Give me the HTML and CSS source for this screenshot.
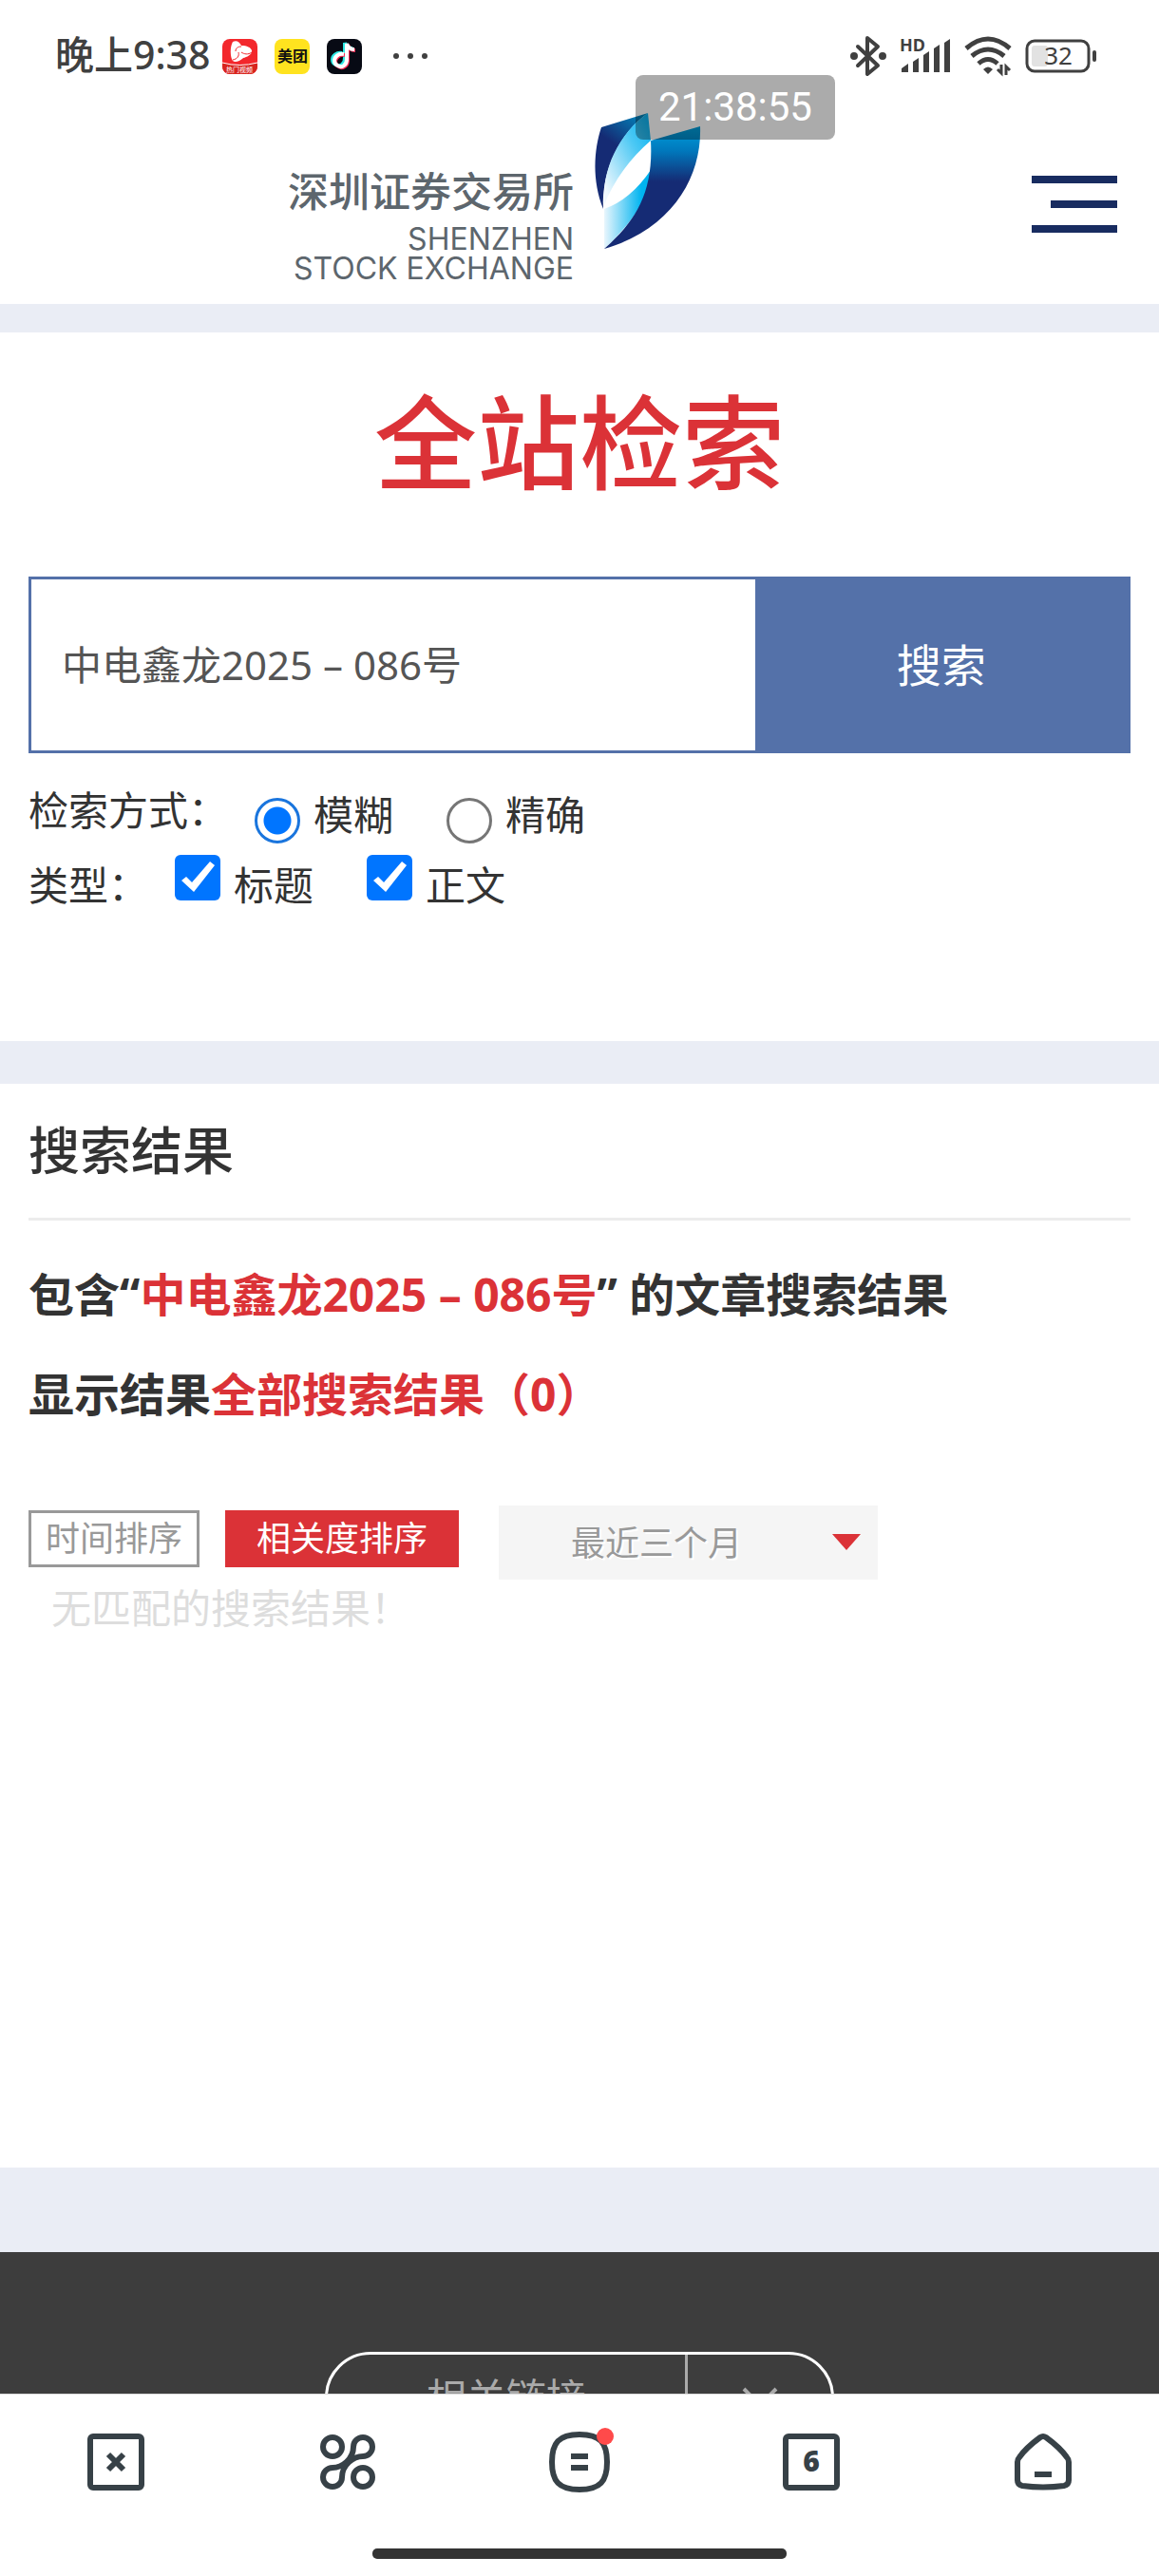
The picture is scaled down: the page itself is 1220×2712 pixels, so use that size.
FILE: index.html
```html
<!DOCTYPE html>
<html lang="zh-CN">
<head>
    <meta charset="UTF-8">
    <meta name="viewport" content="width=device-width, initial-scale=1.0">
    <title>全站检索</title>
    <link rel="stylesheet" href="styles.css">
</head>
<body>
    <div class="page">
        <div class="status-bar">
            <span class="status-time">晚上9:38</span>
            <div class="status-apps">
                <svg class="app-icon" viewBox="0 0 37 37">
                    <rect width="37" height="37" rx="8" fill="#f3272c"/>
                    <path d="M0 25q18 5 37 0v4a8 8 0 0 1-8 8H8a8 8 0 0 1-8-8z" fill="#d8251f"/>
                    <path d="M0 25q18 5 37 0" fill="none" stroke="#fff" stroke-width="1"/>
                    <path d="M11 3c4-2 7 0 9 4 6 0 10 2 11 5 1 4-5 7-9 8-4 4-9 5-11 3-3-4-3-15 0-20z" fill="#fff"/>
                    <path d="M20 8c-4 0-6 2-6 5M31 14c-4 3-8 2-11 0M11 22c5-1 7-4 6-8" fill="none" stroke="#f3272c" stroke-width="1"/>
                    <text x="18" y="35" class="app-caption">热门视频</text>
                </svg>
                <svg class="app-icon" viewBox="0 0 37 37">
                    <rect width="37" height="37" rx="8" fill="#ffe31f"/>
                    <text x="19" y="24" class="app-name">美团</text>
                </svg>
                <svg class="app-icon" viewBox="0 0 37 37">
                    <rect width="37" height="37" rx="8" fill="#070a14"/>
                    <g fill="none" stroke-width="4">
                        <path d="M18 16c-6-1-10 3-10 7s6 8 10 5 3-6 3-9V5c1 4 4 6 8 6" stroke="#2be8e4" transform="translate(-2 -1)"/>
                        <path d="M18 16c-6-1-10 3-10 7s6 8 10 5 3-6 3-9V5c1 4 4 6 8 6" stroke="#fb2c55" transform="translate(1 1)"/>
                        <path d="M18 16c-6-1-10 3-10 7s6 8 10 5 3-6 3-9V5c1 4 4 6 8 6" stroke="#fff"/>
                    </g>
                </svg>
                <svg class="more-icon" viewBox="0 0 38 8" fill="#404040">
                    <circle cx="4" cy="4" r="3"/>
                    <circle cx="19" cy="4" r="3"/>
                    <circle cx="34" cy="4" r="3"/>
                </svg>
            </div>
            <div class="status-system">
                <svg width="38" height="42" viewBox="0 0 38 42" fill="none" stroke="#404040" stroke-width="4" stroke-linejoin="round" stroke-linecap="round">
                    <path d="M8 11l21 20-11 9V2l11 9L8 31"/>
                    <circle cx="4" cy="21" r="2"/>
                    <circle cx="34" cy="21" r="2"/>
                </svg>
                <svg width="54" height="40" viewBox="0 0 54 40" fill="#404040">
                    <text x="0" y="15" class="hd">HD</text>
                    <path d="M2 37v-4l7-5v9zM14 37V26l6-4v15zM25 37V19l6-4v22zM36 37V12l6-4v29zM47 37V6l6-4v35z"/>
                </svg>
                <svg width="50" height="42" viewBox="0 0 50 42" fill="none" stroke="#404040" stroke-width="5">
                    <path d="M2 13q23-20 46 0M8 21q17-14 34 0M15 29q10-9 20 0"/>
                    <path d="M25 40l-5-5q5-5 10 0z" fill="#404040" stroke="none"/>
                    <path d="M39 30v9l-4-4M44 41v-9l4 4" stroke-width="3"/>
                </svg>
                <svg width="76" height="36" viewBox="0 0 76 36">
                    <rect x="2" y="2" width="65" height="32" rx="8" fill="none" stroke="#404040" stroke-width="3"/>
                    <rect x="7" y="7" width="17" height="22" rx="3" fill="#e2e2e2"/>
                    <rect x="71" y="12" width="4" height="12" rx="2" fill="#404040"/>
                    <text x="35" y="27" class="battery">32</text>
                </svg>
            </div>
        </div>

        <header class="header">
            <a class="logo" href="#">
                <span class="logo-text">
                    <span class="logo-cn">深圳证券交易所</span>
                    <span class="logo-en">SHENZHEN<br>STOCK EXCHANGE</span>
                </span>
                <svg class="logo-mark" viewBox="0 0 112 146">
                    <defs>
                        <linearGradient id="navy" x1="1" y1="0" x2=".6" y2="1">
                            <stop offset="0" stop-color="#0090c4"/>
                            <stop offset=".5" stop-color="#152b74"/>
                        </linearGradient>
                        <linearGradient id="right" x1="0" y1="0" x2="0" y2="1">
                            <stop offset="0" stop-color="#00a0dc"/>
                            <stop offset=".2" stop-color="#0078bc"/>
                            <stop offset=".45" stop-color="#152b74"/>
                        </linearGradient>
                        <linearGradient id="sky" x1="1" y1="0" x2="0" y2="1">
                            <stop offset="0" stop-color="#00aeef"/>
                            <stop offset=".35" stop-color="#4bc8f4"/>
                            <stop offset=".9" stop-color="#f0f8fe"/>
                        </linearGradient>
                        <linearGradient id="low" x1="0" y1="0" x2="1" y2="0">
                            <stop offset="0" stop-color="#eaf6fd"/>
                            <stop offset=".8" stop-color="#00b4f0"/>
                        </linearGradient>
                    </defs>
                    <path d="M7 16L56 1C26 22 7 62 9 102-3 72-1 40 7 16z" fill="url(#navy)"/>
                    <path d="M56 1l3 29C38 48 20 72 10 98 7 60 26 22 56 1z" fill="url(#sky)"/>
                    <path d="M59 61Q38 92 10 102v42C42 114 60 86 59 61z" fill="url(#low)"/>
                    <path d="M59 30l52-15c2 52-28 108-101 129C44 114 62 84 59 30z" fill="url(#right)"/>
                </svg>
            </a>
            <button class="menu-button" type="button" aria-label="菜单">
                <svg width="90" height="60" viewBox="0 0 90 60" fill="#182c60">
                    <path d="M0 0h90v8H0zM20 26h70v8H20zM0 52h90v8H0z"/>
                </svg>
            </button>
        </header>

        <section class="search">
            <h1 class="title">全站检索</h1>
            <form class="search-form">
                <div class="search-box">
                    <input class="search-input" type="text" value="中电鑫龙2025 – 086号" aria-label="关键词">
                    <button class="search-button" type="button">搜索</button>
                </div>
                <div class="options options-mode">
                    <span class="options-label">检索方式：</span>
                    <label class="option"><input type="radio" name="mode" checked>模糊</label>
                    <label class="option"><input type="radio" name="mode">精确</label>
                </div>
                <div class="options options-type">
                    <span class="options-label">类型：</span>
                    <label class="option"><input type="checkbox" checked>标题</label>
                    <label class="option"><input type="checkbox" checked>正文</label>
                </div>
            </form>
        </section>

        <section class="results">
            <h2 class="results-title">搜索结果</h2>
            <p class="summary">包含“<span class="keyword">中电鑫龙2025 – 086号</span>” 的文章搜索结果</p>
            <p class="summary">显示结果<span class="keyword">全部搜索结果（0）</span></p>
            <div class="sort">
                <button class="sort-button" type="button">时间排序</button>
                <button class="sort-button active" type="button">相关度排序</button>
                <div class="range">
                    <select class="range-select" aria-label="时间范围">
                        <option>最近三个月</option>
                    </select>
                    <svg class="range-arrow" viewBox="0 0 30 17"><path d="M0 0h30L15 17z" fill="#db3237"/></svg>
                </div>
            </div>
            <p class="empty">无匹配的搜索结果！</p>
        </section>

        <footer class="footer">
            <button class="links" type="button">
                <span class="links-text">相关链接</span>
                <span class="links-arrow">
                    <svg width="36" height="20" viewBox="0 0 36 20" fill="none" stroke="#aaa" stroke-width="4"><path d="M1 1l17 17L35 1"/></svg>
                </span>
            </button>
        </footer>
    </div>

    <nav class="nav">
        <div class="nav-items">
            <button class="nav-button" type="button" aria-label="关闭">
                <svg viewBox="0 0 60 60"><rect x="3" y="3" width="54" height="54" rx="3"/><path d="M22 22l16 16M38 22L22 38"/></svg>
            </button>
            <button class="nav-button" type="button" aria-label="工具">
                <svg viewBox="0 0 60 60"><circle cx="14" cy="14" r="10"/><circle cx="46" cy="46" r="10"/><path d="M46 24a10 10 0 1 0-10-10C36 27 24 36 14 36a10 10 0 1 0 10 10C24 33 36 24 46 24z"/></svg>
            </button>
            <button class="nav-button" type="button" aria-label="菜单栏">
                <svg viewBox="0 0 60 60"><path d="M30 1C52 1 59 10 59 30S52 59 30 59 1 50 1 30 8 1 30 1zM21 24h18M21 36h18"/></svg>
                <span class="dot"></span>
            </button>
            <button class="nav-button" type="button" aria-label="窗口">
                <svg viewBox="0 0 60 60"><rect x="3" y="3" width="54" height="54" rx="3"/><text x="30" y="40" class="tab-count">6</text></svg>
            </button>
            <button class="nav-button" type="button" aria-label="主页">
                <svg viewBox="0 0 60 60"><path d="M27 4q3-2 6 0Q48 15 55 25q2 2 2 5v19q0 5-5 6-22 3-44 0-5-1-5-6V30q0-3 2-5Q12 15 27 4zM21 43h18"/></svg>
            </button>
        </div>
        <div class="home-bar"></div>
    </nav>

    <div class="clock">21:38:55</div>
</body>
</html>
```

FILE: styles.css
```css
* {
    box-sizing: border-box;
}
body {
    margin: 0;
    height: 100vh;
    display: flex;
    flex-direction: column;
    font-family: "Noto Sans", "Noto Sans CJK SC", sans-serif;
    font-size: 42px;
    color: #333;
    background: #fff;
}
button, input, select {
    font: inherit;
    color: inherit;
    margin: 0;
    border: none;
    border-radius: 0;
}
button {
    padding: 0;
    background: none;
    cursor: pointer;
}
svg {
    display: block;
    overflow: visible;
}
h1, h2, p {
    margin: 0;
}
.page {
    flex: 1;
    min-height: 0;
    overflow: hidden;
}

/* status bar */
.status-bar {
    display: flex;
    align-items: center;
    height: 118px;
    padding: 0 65px 0 58px;
}
.status-time {
    font-size: 41px;
    font-weight: 500;
    line-height: 56px;
    padding-bottom: 4px;
    color: #404040;
}
.status-apps {
    display: flex;
    align-items: center;
    gap: 18px;
    margin-left: 12px;
}
.app-icon {
    width: 37px;
    height: 37px;
}
.app-caption {
    font-size: 7px;
    fill: #fff;
    text-anchor: middle;
}
.app-name {
    font-size: 16px;
    font-weight: bold;
    fill: #111;
    text-anchor: middle;
}
.more-icon {
    width: 38px;
    margin-left: 14px;
}
.status-system {
    display: flex;
    align-items: center;
    gap: 14px;
    margin-left: auto;
}
.hd {
    font-size: 18px;
    font-weight: bold;
}
.battery {
    font-size: 26px;
    text-anchor: middle;
    fill: #404040;
}

/* header */
.header {
    display: flex;
    justify-content: space-between;
    padding: 0 44px 0 304px;
    height: 202px;
}
.logo {
    display: flex;
    gap: 22px;
    color: #5d666d;
    text-decoration: none;
}
.logo-text {
    display: flex;
    flex-direction: column;
    align-items: flex-end;
    width: 300px;
    padding-top: 60px;
    white-space: nowrap;
}
.logo-cn {
    font-size: 43px;
    line-height: 48px;
    font-weight: 500;
}
.logo-en {
    font-family: Inter, sans-serif;
    font-size: 32px;
    line-height: 31px;
    text-align: right;
    padding-top: 10px;
}
.logo-mark {
    width: 112px;
    height: 146px;
}
.menu-button {
    align-self: flex-start;
    margin-top: 67px;
}

/* search */
.search {
    border-top: 30px solid #eaedf5;
    border-bottom: 45px solid #eaedf5;
    padding: 48px 30px 132px;
}
.title {
    font-size: 108px;
    line-height: 136px;
    font-weight: 500;
    text-align: center;
    color: #db3237;
}
.search-box {
    display: flex;
    height: 186px;
    margin-top: 73px;
    border: 3px solid #5471a9;
}
.search-input {
    flex: 1;
    min-width: 0;
    padding: 0 32px 6px;
    color: #555;
    outline: none;
}
.search-button {
    flex: 0 0 34%;
    padding-bottom: 6px;
    font-size: 47px;
    color: #fff;
    background: #5471a9;
}
.options {
    display: flex;
    align-items: flex-start;
    gap: 56px;
}
.options-label {
    margin-right: -28px;
}
.options-mode {
    padding-top: 36px;
    line-height: 48px;
}
.options-mode .option {
    line-height: 58px;
}
.options-type {
    padding-top: 12px;
    line-height: 64px;
}
.option {
    display: flex;
    gap: 14px;
}
.option input {
    appearance: none;
    width: 48px;
    height: 48px;
}
.option input[type="radio"] {
    margin-top: 11px;
    border: 3px solid #767676;
    border-radius: 50%;
}
.option input[type="radio"]:checked {
    border-color: #1a75dd;
    background: radial-gradient(circle, #0075ff 14px, #fff 15px);
}
.option input[type="checkbox"] {
    border: 3px solid #767676;
    border-radius: 6px;
}
.option input[type="checkbox"]:checked {
    border: none;
    background: #0075ff;
}
.option input[type="checkbox"]:checked::after {
    content: "";
    display: block;
    height: 48px;
    background: #fff;
    clip-path: polygon(7px 27px, 12px 23px, 18px 29px, 37px 7px, 42px 11px, 20px 39px);
}

/* results */
.results {
    padding: 30px 30px 559px;
}
.results-title {
    font-size: 54px;
    line-height: 80px;
    font-weight: 500;
    padding-bottom: 31px;
    border-bottom: 3px solid #ececec;
    margin-bottom: 25px;
}
.summary {
    font-size: 48px;
    line-height: 105px;
    font-weight: bold;
}
.keyword {
    color: #db3237;
}
.sort {
    display: flex;
    align-items: flex-start;
    margin-top: 65px;
    font-size: 36px;
    color: #999;
}
.sort-button {
    height: 60px;
    margin-top: 5px;
    padding: 0 15px;
    border: 3px solid #999;
    line-height: 54px;
}
.sort-button.active {
    margin-left: 27px;
    padding: 0 30px;
    color: #fff;
    background: #db3237;
    border-color: #db3237;
}
.range {
    position: relative;
    margin-left: 42px;
}
.range-select {
    appearance: none;
    width: 399px;
    height: 78px;
    padding: 0 76px;
    background: #f5f5f5;
    text-shadow: 2px 2px 0 #fff;
}
.range-arrow {
    position: absolute;
    top: 30px;
    right: 18px;
    width: 30px;
    pointer-events: none;
}
.empty {
    padding-left: 24px;
    line-height: 60px;
    color: #ddd;
}

/* footer */
.footer {
    border-top: 89px solid #eaedf5;
    background: #3d3d3d;
    padding: 105px 0;
    display: flex;
    justify-content: center;
}
.links {
    display: flex;
    width: 536px;
    height: 96px;
    border: 3px solid #fff;
    border-radius: 48px;
    color: #aaa;
}
.links-text {
    flex: 1;
    line-height: 90px;
}
.links-arrow {
    display: flex;
    align-items: center;
    justify-content: center;
    width: 154px;
    height: 100%;
    border-left: 3px solid #aaa;
}

/* bottom nav */
.nav {
    border-top: 1px solid #ddd;
    background: #fff;
    padding: 41px 0 18px;
}
.nav-items {
    display: grid;
    grid-template-columns: repeat(5, 1fr);
    justify-items: center;
}
.nav-button {
    position: relative;
    width: 60px;
    height: 60px;
}
.nav-button svg {
    fill: none;
    stroke: #374147;
    stroke-width: 6;
}
.nav-button .tab-count {
    font-family: "Open Sans", sans-serif;
    font-size: 30px;
    font-weight: 800;
    fill: #374147;
    stroke: none;
    text-anchor: middle;
}
.dot {
    position: absolute;
    top: -6px;
    right: -6px;
    width: 18px;
    height: 18px;
    border-radius: 50%;
    background: #ff4a4a;
}
.home-bar {
    width: 436px;
    height: 11px;
    margin: 61px auto 0;
    border-radius: 5px;
    background: #333;
}

/* floating clock */
.clock {
    position: absolute;
    top: 79px;
    left: 669px;
    padding: 0 24px;
    border-radius: 8px;
    font-family: Roboto, sans-serif;
    font-size: 42px;
    line-height: 68px;
    color: #fff;
    background: rgba(0, 0, 0, 0.33);
}
```
